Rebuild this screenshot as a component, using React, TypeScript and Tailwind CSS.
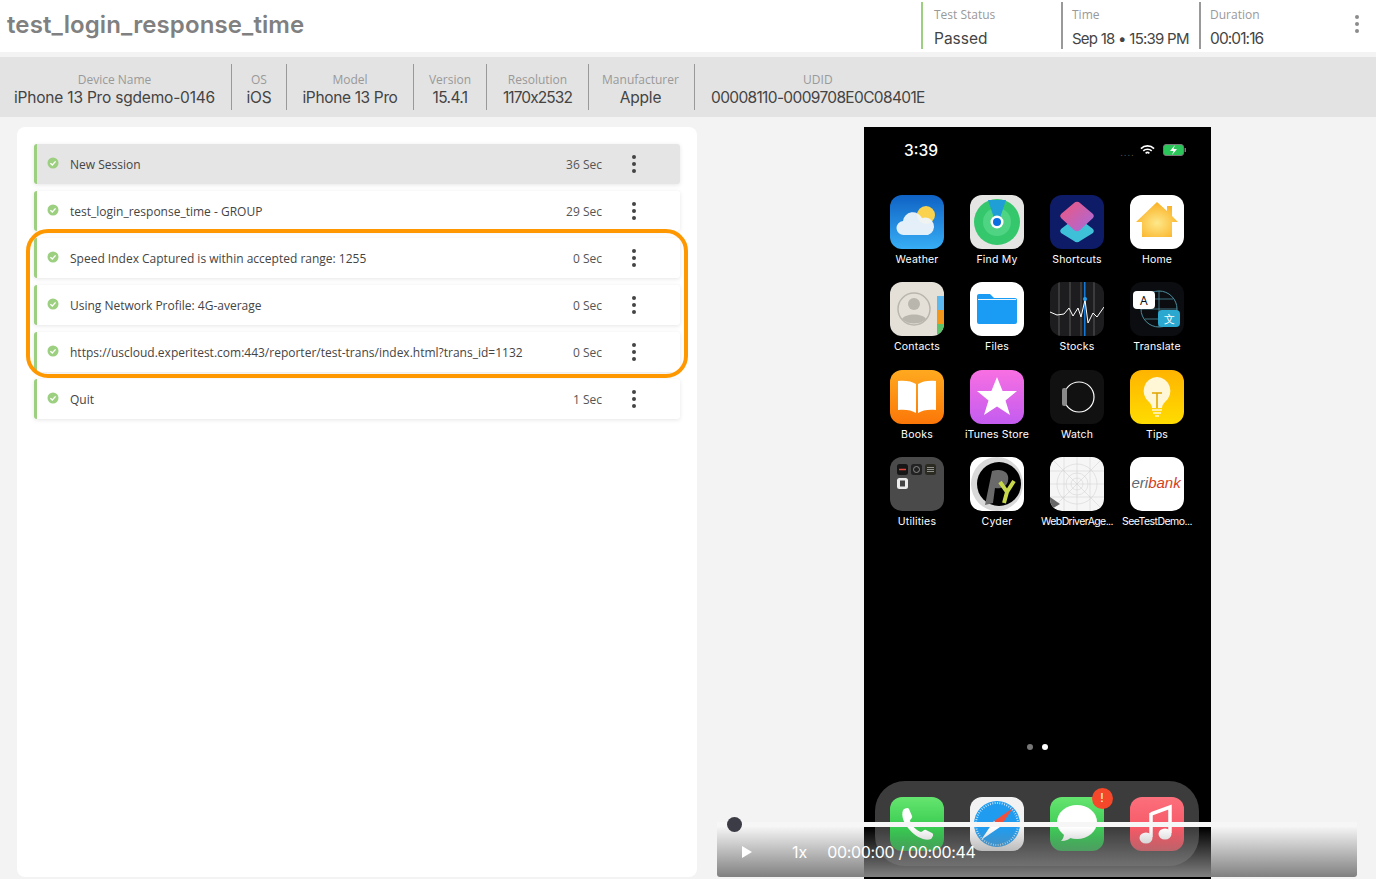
import { ReactNode } from "react";

const heads = "font-['Inter','Liberation_Sans',sans-serif]";
const body = "font-['Open_Sans','Liberation_Sans',sans-serif]";

const deviceInfo = [
  { label: "Device Name", value: "iPhone 13 Pro sgdemo-0146", width: "w-[232px] pr-[2px]", track: "tracking-[-0.2px]" },
  { label: "OS", value: "iOS", width: "w-[55px]", track: "tracking-[-0.2px]" },
  { label: "Model", value: "iPhone 13 Pro", width: "w-[127px]", track: "tracking-[-0.35px]" },
  { label: "Version", value: "15.4.1", width: "w-[73px]", track: "tracking-[-0.6px]" },
  { label: "Resolution", value: "1170x2532", width: "w-[102px]", track: "tracking-[-0.9px]" },
  { label: "Manufacturer", value: "Apple", width: "w-[106px] pr-[2px]", track: "tracking-[-0.2px]" },
];

const steps = [
  { name: "New Session", time: "36 Sec", active: true },
  { name: "test_login_response_time - GROUP", time: "29 Sec" },
  { name: "Speed Index Captured is within accepted range: 1255", time: "0 Sec" },
  { name: "Using Network Profile: 4G-average", time: "0 Sec" },
  { name: "https://uscloud.experitest.com:443/reporter/test-trans/index.html?trans_id=1132", time: "0 Sec" },
  { name: "Quit", time: "1 Sec" },
];

function Kebab({ className }: { className: string }) {
  return (
    <div className={`flex flex-col gap-[3px] ${className}`}>
      <span className="size-[4px] rounded-full bg-current" />
      <span className="size-[4px] rounded-full bg-current" />
      <span className="size-[4px] rounded-full bg-current" />
    </div>
  );
}

function StatusCheck() {
  return (
    <svg viewBox="0 0 12 12" className="mt-[-3px] size-[12px] shrink-0">
      <circle cx="6" cy="6" r="5.5" fill="#9ccf7f" />
      <path d="M3.4 6.2 5.3 8l3.3-3.6" fill="none" stroke="#fff" strokeWidth="1.4" />
    </svg>
  );
}

function StepRow({ name, time, active }: { name: string; time: string; active?: boolean }) {
  return (
    <div
      className={`flex h-[40px] items-center rounded-[3px] border-l-[3px] border-[#9ccf7f] pl-[10px] shadow-[0_1px_4px_rgba(0,0,0,0.1)] ${
        active ? "bg-[#e5e5e5]" : "bg-white"
      }`}
    >
      <StatusCheck />
      <span className={`mt-[1px] ml-[11px] flex-1 text-[12px] text-[#444] ${body}`}>{name}</span>
      <span className={`mt-[1px] text-[12px] text-[#555] ${body}`}>{time}</span>
      <Kebab className="mr-[44px] ml-[30px] text-[#444]" />
    </div>
  );
}

function MetaCell({ label, value, border, width, track }: { label: string; value: string; border: string; width: string; track: string }) {
  return (
    <div className={`h-[47px] ${width} border-l-2 ${border}`}>
      <div className={`mt-[5px] text-[12px] leading-[16px] text-[#999] ${body}`}>{label}</div>
      <div className={`mt-[6px] leading-[20px] whitespace-nowrap text-[#444] ${track} ${heads}`}>{value}</div>
    </div>
  );
}

function AppIcon({ label, children, track }: { label?: string; children: ReactNode; track?: string }) {
  return (
    <div className="flex w-[80px] flex-col items-center">
      <div className="size-[54px] overflow-hidden rounded-[12px]">
        <svg viewBox="0 0 54 54" className="size-[54px]">
          {children}
        </svg>
      </div>
      {label && (
        <span className={`mt-[4px] text-[10.5px] leading-[14px] whitespace-nowrap text-white font-['Inter',sans-serif] ${track ?? "tracking-[0.2px]"}`}>
          {label}
        </span>
      )}
    </div>
  );
}

function Weather() {
  return (
    <>
      <defs>
        <linearGradient id="wx" x1="0" y1="0" x2="0" y2="1">
          <stop offset="0" stopColor="#0f62c4" />
          <stop offset="1" stopColor="#37aef5" />
        </linearGradient>
      </defs>
      <rect width="54" height="54" fill="url(#wx)" />
      <circle cx="36" cy="20" r="9" fill="#fbd24e" />
      <path d="M14 40a7 7 0 0 1-1-14 10 10 0 0 1 19-3 8.500 8.500 0 0 1 6 17z" fill="#eef4fa" opacity="0.95" />
    </>
  );
}

function FindMy() {
  return (
    <>
      <rect width="54" height="54" fill="#e5e5e3" />
      <circle cx="27" cy="27" r="23" fill="#34c76b" />
      <circle cx="27" cy="27" r="14" fill="#4fd484" />
      <path d="M18 5h18l-6 18h-6z" fill="#1f9fd6" />
      <circle cx="27" cy="27" r="6.500" fill="#fff" />
      <circle cx="27" cy="27" r="4" fill="#0a6fe0" />
    </>
  );
}

function Shortcuts() {
  return (
    <>
      <defs>
        <linearGradient id="sc" x1="0" y1="0" x2="1" y2="1">
          <stop offset="0" stopColor="#f0567c" />
          <stop offset="1" stopColor="#a56be0" />
        </linearGradient>
      </defs>
      <rect width="54" height="54" fill="#0e1b66" />
      <path d="M24 24a4 4 0 0 1 6 0l13 10a3 3 0 0 1 0 4L30 46a4 4 0 0 1-6 0L11 38a3 3 0 0 1 0-4z" fill="#3fc0d9" />
      <path d="M24 8a4 4 0 0 1 6 0l13 11a3 3 0 0 1 0 4L30 35a4 4 0 0 1-6 0L11 23a3 3 0 0 1 0-4z" fill="url(#sc)" />
    </>
  );
}

function Home() {
  return (
    <>
      <defs>
        <radialGradient id="hm" cx="0.5" cy="0.6" r="0.55">
          <stop offset="0" stopColor="#fde88a" />
          <stop offset="1" stopColor="#fbb52b" />
        </radialGradient>
      </defs>
      <rect width="54" height="54" fill="#fff" />
      <path d="M27 7 37 16V11h5v10l6 6h-6v15H12V27H6z" fill="url(#hm)" />
    </>
  );
}

function Contacts() {
  return (
    <>
      <rect width="54" height="54" fill="#e4e0d8" />
      <rect x="47" y="14" width="7" height="14" fill="#5db8ef" />
      <rect x="47" y="28" width="7" height="14" fill="#f2971c" />
      <rect x="47" y="42" width="7" height="12" fill="#5cc36a" />
      <circle cx="24" cy="27" r="16" fill="none" stroke="#b9b6ae" strokeWidth="1.5" />
      <circle cx="24" cy="22" r="6" fill="#b9b6ae" />
      <path d="M12 37c3-6 21-6 24 0-6 6-18 6-24 0z" fill="#b9b6ae" />
    </>
  );
}

function Files() {
  return (
    <>
      <rect width="54" height="54" fill="#fff" />
      <path d="M7 14a2 2 0 0 1 2-2h11l4 4h21a2 2 0 0 1 2 2v22a2 2 0 0 1-2 2H9a2 2 0 0 1-2-2z" fill="#1a9cf5" />
      <rect x="8" y="17" width="38" height="1" fill="#e8f5ff" />
    </>
  );
}

function Stocks() {
  return (
    <>
      <rect width="54" height="54" fill="#1d1d1f" />
      <path d="M9 0v54M20 0v54M31 0v54M44 0v54" stroke="#6b6b6b" strokeWidth="0.8" />
      <rect x="34" y="0" width="1.5" height="54" fill="#1479d6" />
      <path d="M0 30 7 33l7-1 5-6 4 8 5-8 3 9 4-17 3 23 5-10 4 4 7-10" fill="none" stroke="#fff" strokeWidth="1" />
      <circle cx="35" cy="17" r="2" fill="#25a1f5" />
    </>
  );
}

function Translate() {
  return (
    <>
      <rect width="54" height="54" fill="#0c0d10" />
      <circle cx="29" cy="27" r="18" fill="none" stroke="#4d8d9e" strokeWidth="1" />
      <path d="M29 9v36M11 27h36M15 17h28M15 37h28" stroke="#4d8d9e" strokeWidth="0.8" />
      <rect x="3" y="9" width="22" height="18" rx="4" fill="#fff" />
      <text x="10" y="23" fontSize="12" fill="#111">A</text>
      <rect x="28" y="28" width="22" height="17" rx="4" fill="#2aa8cf" />
      <text x="34" y="41" fontSize="11" fill="#fff">文</text>
    </>
  );
}

function Books() {
  return (
    <>
      <defs>
        <linearGradient id="bk" x1="0" y1="0" x2="0" y2="1">
          <stop offset="0" stopColor="#ffa91f" />
          <stop offset="1" stopColor="#fb7708" />
        </linearGradient>
      </defs>
      <rect width="54" height="54" fill="url(#bk)" />
      <path d="M26 14c-4-3-12-4-18-3v29c6-1 14 0 18 3zM28 14c4-3 12-4 18-3v29c-6-1-14 0-18 3z" fill="#fff" />
    </>
  );
}

function Itunes() {
  return (
    <>
      <defs>
        <linearGradient id="it" x1="0" y1="0" x2="0" y2="1">
          <stop offset="0" stopColor="#f86fe2" />
          <stop offset="1" stopColor="#c35cf0" />
        </linearGradient>
      </defs>
      <rect width="54" height="54" fill="url(#it)" />
      <path d="m27 7 5.600 14H47L35.500 30.500 40 45 27 36.500 14 45l4.500-14.500L7 21h14.400z" fill="#fff" />
    </>
  );
}

function Watch() {
  return (
    <>
      <rect width="54" height="54" fill="#111" />
      <circle cx="29" cy="27" r="15" fill="none" stroke="#fff" strokeWidth="1.200" />
      <rect x="12" y="18" width="5" height="18" rx="2" fill="#8a8a8a" />
    </>
  );
}

function Tips() {
  return (
    <>
      <defs>
        <linearGradient id="tp" x1="0" y1="0" x2="0" y2="1">
          <stop offset="0" stopColor="#ffb400" />
          <stop offset="1" stopColor="#ffdc00" />
        </linearGradient>
      </defs>
      <rect width="54" height="54" fill="url(#tp)" />
      <path d="M27 7a14 14 0 0 0-8 25c2 2 3 4 3 6h10c0-2 1-4 3-6a14 14 0 0 0-8-25z" fill="#fff7d6" />
      <path d="M22 23h10M27 23v15" stroke="#e0a500" strokeWidth="1.600" fill="none" />
      <path d="M22 40h10M23 43h8M25 46h4" stroke="#fff7d6" strokeWidth="1.600" />
    </>
  );
}

function Utilities() {
  return (
    <>
      <rect width="54" height="54" fill="#4a4a4a" />
      <rect x="7" y="7" width="11" height="11" rx="2.500" fill="#161616" />
      <path d="M9 12.500h7" stroke="#e4483c" strokeWidth="1.500" />
      <rect x="21" y="7" width="11" height="11" rx="2.500" fill="#222" />
      <circle cx="26.500" cy="12.500" r="3" fill="none" stroke="#888" />
      <rect x="35" y="7" width="11" height="11" rx="2.500" fill="#2b2b22" />
      <path d="M37 10.500h7M37 12.500h7M37 14.500h7" stroke="#aaa" strokeWidth="0.800" />
      <rect x="7" y="21" width="11" height="11" rx="2.500" fill="#ececec" />
      <rect x="10" y="23.500" width="5" height="6" fill="#444" />
    </>
  );
}

function Cyder() {
  return (
    <>
      <rect width="54" height="54" fill="#fff" />
      <ellipse cx="27" cy="27" rx="26" ry="27" fill="#d9d9d9" />
      <ellipse cx="29" cy="27" rx="22" ry="22" fill="#000" />
      <path d="M15 48 22 14c10-3 18 1 16 10-1 6-8 8-13 7l-2 15z" fill="#6a6a6a" />
      <path d="M30 25 37 35 44 24 37 35 34 46" fill="none" stroke="#c8d84a" strokeWidth="4" />
    </>
  );
}

function WebDriver() {
  return (
    <>
      <rect width="54" height="54" fill="#f6f6f6" />
      <path d="M0 14h54M0 27h54M0 40h54M14 0v54M27 0v54M40 0v54M0 0l54 54M54 0 0 54" stroke="#cfcfcf" strokeWidth="0.500" />
      <circle cx="27" cy="27" r="20" fill="none" stroke="#cfcfcf" strokeWidth="0.500" />
      <circle cx="27" cy="27" r="11" fill="none" stroke="#cfcfcf" strokeWidth="0.500" />
      <circle cx="27" cy="27" r="6" fill="none" stroke="#cfcfcf" strokeWidth="0.500" />
      <path d="M0 40 10 47 0 53z" fill="#666" />
    </>
  );
}

function Eribank() {
  return (
    <>
      <rect width="54" height="54" fill="#fff" />
      <text x="1.500" y="31" fontSize="15" fontStyle="italic" fontFamily="Liberation Sans" fill="#5a6b75">
        eri<tspan fill="#d4401f">bank</tspan>
      </text>
    </>
  );
}

function Phone() {
  return (
    <>
      <defs>
        <linearGradient id="ph" x1="0" y1="0" x2="0" y2="1">
          <stop offset="0" stopColor="#65e56f" />
          <stop offset="1" stopColor="#18b93b" />
        </linearGradient>
      </defs>
      <rect width="54" height="54" fill="url(#ph)" />
      <path d="M13 13c2-2 5-3 6-1l3 7c1 2-2 3-2 5 2 5 6 9 11 11 2 0 3-3 5-2l6 3c2 1 1 4-1 6-10 5-33-15-28-29z" fill="#fff" />
    </>
  );
}

function Safari() {
  return (
    <>
      <rect width="54" height="54" fill="#f2f2f2" />
      <circle cx="27" cy="27" r="23" fill="#1f9cf0" />
      <circle cx="27" cy="27" r="21" fill="none" stroke="#d7ecfb" strokeWidth="2" strokeDasharray="0.8 1.6" />
      <path d="M43 11 30 30l-6-6z" fill="#f2503c" />
      <path d="M11 43l13-19 6 6z" fill="#fff" />
    </>
  );
}

function Messages() {
  return (
    <>
      <defs>
        <linearGradient id="ms" x1="0" y1="0" x2="0" y2="1">
          <stop offset="0" stopColor="#65e56f" />
          <stop offset="1" stopColor="#22b845" />
        </linearGradient>
      </defs>
      <rect width="54" height="54" fill="url(#ms)" />
      <ellipse cx="27" cy="25" rx="20" ry="17" fill="#fff" />
      <path d="M14 36c0 4-1 6-3 8 5 0 9-2 12-5z" fill="#fff" />
    </>
  );
}

function Music() {
  return (
    <>
      <defs>
        <linearGradient id="mu" x1="0" y1="0" x2="0" y2="1">
          <stop offset="0" stopColor="#fc6f7c" />
          <stop offset="1" stopColor="#f24a58" />
        </linearGradient>
      </defs>
      <rect width="54" height="54" fill="url(#mu)" />
      <path d="M21 17 40 10v26" fill="none" stroke="#fff" strokeWidth="3.500" />
      <path d="M21 16v24" stroke="#fff" strokeWidth="3.500" />
      <ellipse cx="16" cy="41" rx="6.500" ry="5.500" fill="#fff" />
      <ellipse cx="35" cy="37" rx="6.500" ry="5.500" fill="#fff" />
    </>
  );
}

const apps: { label: string; icon: ReactNode; track?: string }[] = [
  { label: "Weather", icon: <Weather /> },
  { label: "Find My", icon: <FindMy /> },
  { label: "Shortcuts", icon: <Shortcuts /> },
  { label: "Home", icon: <Home /> },
  { label: "Contacts", icon: <Contacts /> },
  { label: "Files", icon: <Files /> },
  { label: "Stocks", icon: <Stocks /> },
  { label: "Translate", icon: <Translate /> },
  { label: "Books", icon: <Books /> },
  { label: "iTunes Store", icon: <Itunes /> },
  { label: "Watch", icon: <Watch /> },
  { label: "Tips", icon: <Tips /> },
  { label: "Utilities", icon: <Utilities /> },
  { label: "Cyder", icon: <Cyder /> },
  { label: "WebDriverAge...", icon: <WebDriver />, track: "tracking-[-0.6px]" },
  { label: "SeeTestDemo...", icon: <Eribank />, track: "tracking-[-0.55px]" },
];

function PhoneScreen() {
  return (
    <div className="flex h-[752px] w-[347px] flex-col bg-black">
      <div className="flex h-[68px] items-start pt-[15px] pr-[24px] pl-[40px]">
        <span className="text-[15.5px] leading-[18px] font-medium text-white font-['Inter',sans-serif]">3:39</span>
        <span className="ml-auto flex items-center pt-[1px]">
          <span className="mt-[6px] text-[8px] leading-[8px] tracking-[1.5px] text-[#666]">....</span>
          <svg viewBox="0 0 16 12" className="ml-[5px] h-[12px] w-[15px]">
            <path d="M1 4.500a10 10 0 0 1 14 0M3.500 7a6.500 6.500 0 0 1 9 0M6 9.500a3 3 0 0 1 4 0" fill="none" stroke="#fff" strokeWidth="1.700" />
          </svg>
          <svg viewBox="0 0 24 12" className="ml-[8px] h-[12px] w-[24px]">
            <rect x="0.500" y="0.500" width="20" height="11" rx="2.500" fill="#2bc659" stroke="#777" />
            <rect x="21.500" y="4" width="1.500" height="4" fill="#777" />
            <path d="M12 1 7 7h3.500L9 11l5-6h-3.500z" fill="#fff" />
          </svg>
        </span>
      </div>
      <div className="grid grid-cols-[repeat(4,80px)] gap-y-[15.3px] pl-[13px]">
        {apps.map((app) => (
          <AppIcon key={app.label} label={app.label} track={app.track}>
            {app.icon}
          </AppIcon>
        ))}
      </div>
      <div className="mt-[215px] flex justify-center gap-[9px] pr-[1px]">
        <span className="size-[6px] rounded-full bg-[#777]" />
        <span className="size-[6px] rounded-full bg-white" />
      </div>
      <div className="mt-[31px] ml-[11px] flex h-[85px] w-[324px] items-start justify-center rounded-[30px] bg-[#3c3c3c] pt-[16px] pr-[1px]">
        <AppIcon><Phone /></AppIcon>
        <AppIcon><Safari /></AppIcon>
        <div className="relative">
          <AppIcon><Messages /></AppIcon>
          <span className="absolute top-[-9px] right-[4px] flex size-[21px] items-center justify-center rounded-full bg-[#f5482a] text-[12px] text-white font-['Inter',sans-serif]">
            !
          </span>
        </div>
        <AppIcon><Music /></AppIcon>
      </div>
    </div>
  );
}

function VideoControls() {
  return (
    <div className="absolute right-[19px] bottom-[2px] left-[717px] h-[55px]">
      <div className="h-full rounded-b-[3px] bg-gradient-to-b from-[rgba(128,128,128,0)] from-[10%] to-[#808080]">
        <div className="h-[5px] bg-[#f6f6f6]" />
        <div className="flex items-center pt-[15px] pl-[25px] text-white font-['Inter',sans-serif]">
          <svg viewBox="0 0 10 12" className="h-[12px] w-[10px]">
            <path d="M0 0 10 6 0 12z" fill="#fff" />
          </svg>
          <span className="ml-[40px] text-[16px] leading-[20px]">1x</span>
          <span className="ml-[20px] text-[16px] leading-[20px] tracking-[-0.35px]">00:00:00 / 00:00:44</span>
        </div>
      </div>
      <span className="absolute top-[-5px] left-[10px] size-[15px] rounded-full bg-[#3c3c46]" />
    </div>
  );
}

export default function App() {
  return (
    <div className="relative h-[879px] w-full overflow-hidden bg-[#f3f3f3]">
      <header className="flex h-[52px] items-start bg-white">
        <h1 className={`mt-[9px] ml-[7px] text-[24px] leading-[32px] font-semibold tracking-[0.1px] text-[#808080] ${heads}`}>
          test_login_response_time
        </h1>
        <div className="mt-[2px] ml-auto flex">
          <MetaCell label="Test Status" value="Passed" border="border-[#9ccf7f] pl-[11px]" width="w-[140px]" track="text-[15.5px]" />
          <MetaCell label="Time" value="Sep 18 • 15:39 PM" border="border-[#999] pl-[9px]" width="w-[138px]" track="text-[15px] tracking-[-0.75px]" />
          <MetaCell label="Duration" value="00:01:16" border="border-[#999] pl-[9px]" width="w-[156px]" track="text-[15.5px] tracking-[-0.9px]" />
          <Kebab className="mt-[13px] mr-[17px] w-[4px] text-[#8c8c8c]" />
        </div>
      </header>

      <section className="mt-[5px] flex h-[60px] items-center bg-[#e3e3e3]">
        {deviceInfo.map((item) => (
          <div key={item.label} className={`flex h-[46px] flex-col items-center justify-center border-r border-[#999] pt-[6px] ${item.width}`}>
            <span className={`text-[12px] leading-[16px] text-[#999] ${body}`}>{item.label}</span>
            <span className={`text-[15.5px] leading-[20px] whitespace-nowrap text-[#444] ${item.track} ${heads}`}>{item.value}</span>
          </div>
        ))}
        <div className="flex h-[46px] flex-col items-center justify-center pt-[6px] pl-[16px]">
          <span className={`text-[12px] leading-[16px] text-[#999] ${body}`}>UDID</span>
          <span className={`text-[15.5px] leading-[20px] tracking-[-0.65px] whitespace-nowrap text-[#444] ${heads}`}>00008110-0009708E0C08401E</span>
        </div>
      </section>

      <main className="mt-[10px] flex items-start">
        <div className="ml-[17px] h-[750px] w-[680px] rounded-[8px] bg-white pt-[17px] pr-[17px] pl-[17px]">
          <div className="flex flex-col gap-[7px]">
            {steps.map((step) => (
              <StepRow key={step.name} {...step} />
            ))}
          </div>
        </div>
        <div className="ml-[167px]">
          <PhoneScreen />
        </div>
      </main>

      <div className="pointer-events-none absolute top-[229px] left-[26px] h-[149px] w-[662px] rounded-[22px] border-[4px] border-[#ff9800]" />
      <VideoControls />
    </div>
  );
}
